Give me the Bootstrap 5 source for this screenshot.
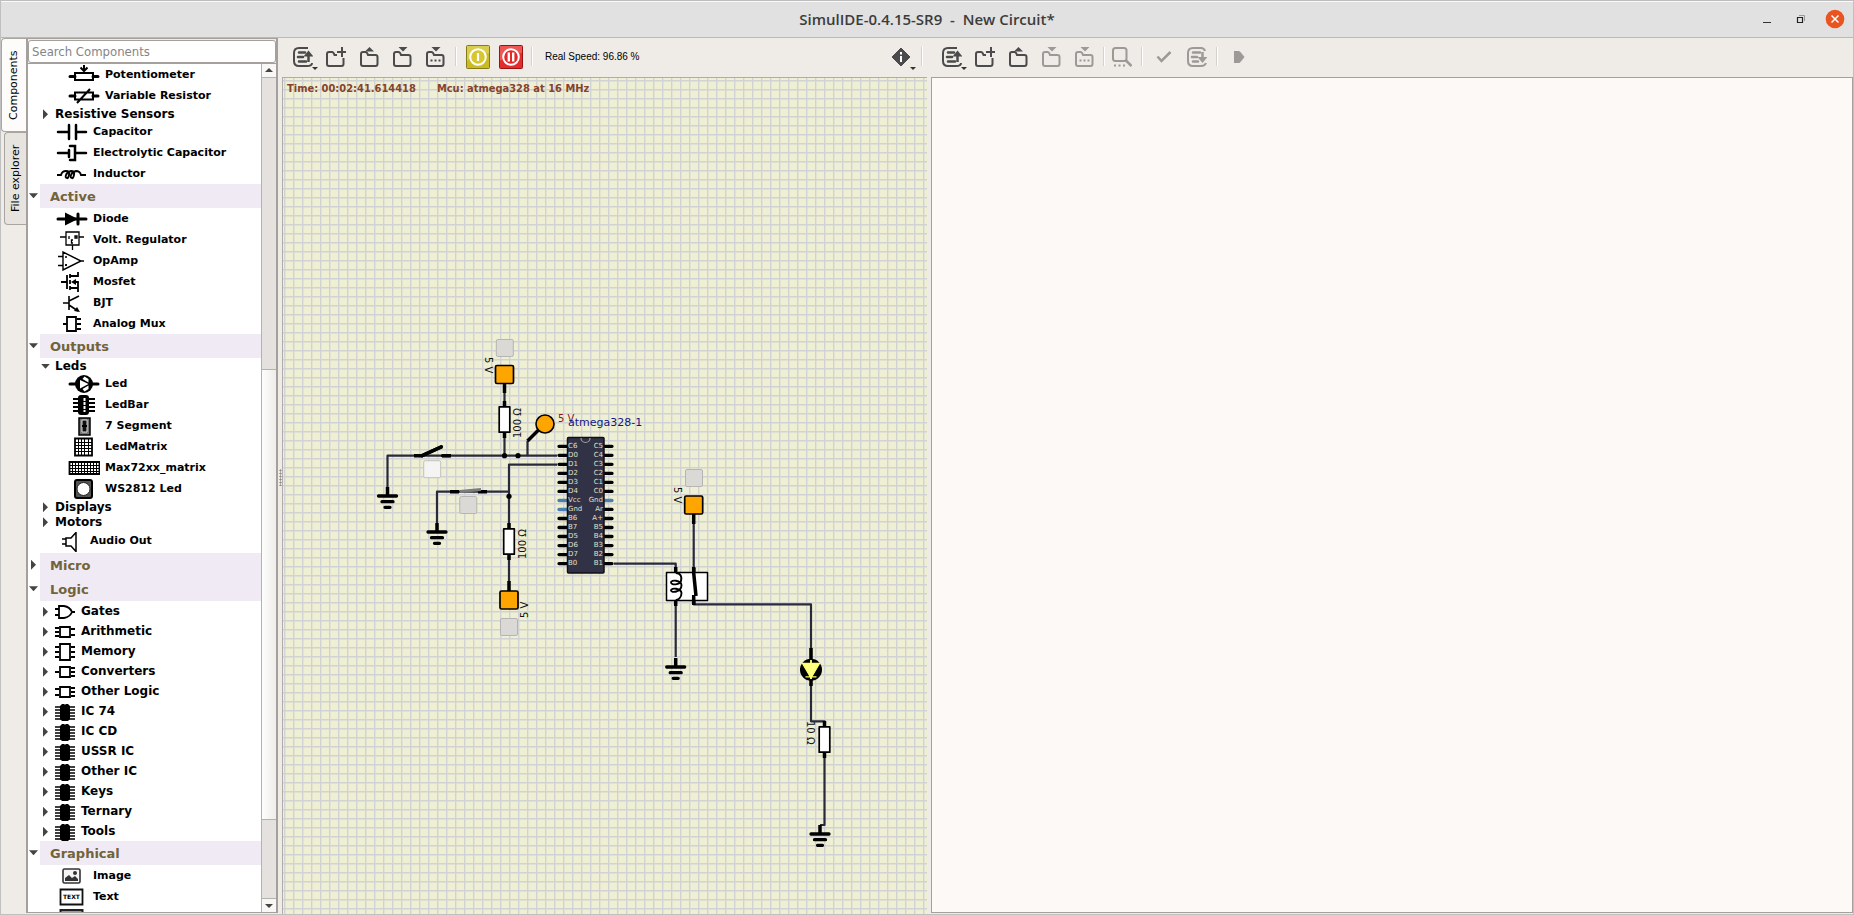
<!DOCTYPE html>
<html lang="en">
<head>
<meta charset="utf-8">
<meta name="viewport" content="width=device-width, initial-scale=1">
<title>SimulIDE-0.4.15-SR9 - New Circuit*</title>
<link href="https://cdn.jsdelivr.net/npm/bootstrap@5.3.0/dist/css/bootstrap.min.css" rel="stylesheet">
<style>
  body { font-family: "DejaVu Sans", sans-serif; font-size: 11px; color: #000; background: #efebe7; }
  button { padding: 0; border: 0; background: none; color: inherit; }
  svg { display: block; flex: none; }

  .app { border: 1px solid #c0c0c0; border-top: 0; }
  .titlebar { height: 38px; background: #e1e1e1; border-top: 1px solid #bdbdbd; border-bottom: 1px solid #b9b9b9; box-shadow: inset 0 1px #fafafa; }
  .titlebar h1 { font: 600 15px/20px "Open Sans", "Noto Sans", sans-serif; color: #3c3c3c; white-space: pre; }
  .window-buttons { position: absolute; right: 8px; top: 8px; gap: 14px; }
  .window-buttons button { width: 20px; height: 20px; }
  .window-buttons svg { margin: auto; }

  .sidebar { width: 277px; }
  .side-tabs { width: 25px; }
  .side-tabs button { writing-mode: vertical-rl; transform: rotate(180deg); font-size: 11px; line-height: 20px; border: 1px solid #a9a5a0; border-left: 0; border-radius: 0 4px 4px 0; }
  .side-tabs .current { width: 25px; height: 94px; background: #fdfcfb; }
  .side-tabs .other { width: 22px; height: 93px; background: #e7e4e0; align-self: flex-end; }
  .panel { border: solid #a5a09b; border-width: 1px 2px; margin-bottom: 1px; border-bottom-width: 1px; }
  .search { height: 23px; margin: 1px 0 0; padding: 0 3px; border: 1px solid #a5a09b; border-radius: 3px; font: 13px/20px "DejaVu Sans Condensed", "DejaVu Sans", sans-serif; }
  .search::placeholder { color: #858585; opacity: 1; }
  .tree-frame { border-top: 1px solid #a5a09b; background: #fff; overflow: hidden; }
  .tree { height: 100%; overflow: hidden; font-weight: 700; }
  .tree li { display: flex; align-items: center; white-space: nowrap; }
  .item { height: 21px; padding: 2px 0 0 28px; }
  .item svg { width: 32px; height: 20px; margin-right: 5px; }
  .item.deep { padding-left: 40px; }
  .item.sound { height: 24px; padding-left: 25px; }
  .subgroup { height: 15px; font-size: 12px; line-height: 15px; padding: 2px 0 0 15px; }
  .subgroup.pictured { height: 20px; }
  .subgroup .arrow { margin-right: 7px; }
  .subgroup .arrow.open { margin: 0 5px 0 -2px; }
  .subgroup.pictured svg { width: 20px; height: 18px; margin-right: 6px; }
  .group { height: 24px; font-size: 13px; color: #71633a; }
  .group span { flex: 1; height: 24px; line-height: 25px; padding-left: 10px; background: #f0eaf5; }
  .arrow { width: 5px; height: 10px; flex: none; background: #444; clip-path: polygon(0 0, 100% 50%, 0 100%); }
  .arrow.open { width: 9px; height: 5px; clip-path: polygon(0 0, 100% 0, 50% 100%); }
  .group .arrow { margin: 0 4px 0 3px; }
  .group .arrow.open { margin: 0 2px 0 1px; }
  .scrollbar { width: 15px; background: #e5e1de; border-left: 1px solid #b5b1ac; }
  .scrollbar button { height: 14px; background: #f8f7f6; border-bottom: 1px solid #b5b1ac; }
  .scrollbar button:last-child { border: 0; border-top: 1px solid #b5b1ac; }
  .scrollbar svg { margin: auto; }
  .before-thumb { flex: 292; }
  .thumb { flex: 450; background: linear-gradient(90deg, #fdfdfc, #efedea); border: solid #b5b1ac; border-width: 1px 0; }
  .after-thumb { flex: 78; }

  .grip { width: 4px; }
  .grip i { width: 3px; height: 17px; margin-top: 431px; background: radial-gradient(circle, #8d8984 40%, transparent 60%) 0 0 / 3px 3px; }
  .pane-circuit { flex: 645 1 0; }
  .pane-editor { flex: 926 1 0; }
  .tools { height: 39px; padding-bottom: 2px; color: #4b4b4b; }
  .tools button { width: 33px; height: 26px; position: relative; }
  .tools button > svg { margin: auto; }
  .tools button:disabled { color: #9c9a97; }
  .tools .drop::after { content: ""; position: absolute; right: 1px; bottom: 0; border: solid transparent; border-width: 3px 3px 0; border-top-color: #333; }
  .tools .rule { width: 2px; height: 19px; background: #d5d2ce; border-right: 1px solid #fff; }
  .pane-editor .rule { margin-left: 3px; }
  .speed { font: 10px/14px "Liberation Sans", sans-serif; color: #000; }
  .schematic { border: 1px solid #b0aca7; border-width: 1px 0 0 1px; overflow: hidden; background: #eff0d3; position: relative; }
  .schematic > svg { position: absolute; inset: 0; }
  .status { position: absolute; left: 4px; top: 4px; gap: 21px; font: 700 11px/14px "DejaVu Sans Condensed", "DejaVu Sans", sans-serif; color: #85432f; white-space: nowrap; }
  .code { resize: none; border: 1px solid #a5a09b; background: #fdf9f6; border-radius: 0; outline: 0; margin-bottom: 1px; }
</style>
</head>
<body>
<svg width="0" height="0" class="position-absolute" aria-hidden="true">
  <defs>
    <symbol id="i-file" viewBox="0 0 20 20"><path d="M15 1H6Q1 1 1 6v8q0 5 5 5h8q5 0 5-3" fill="none" stroke="currentColor" stroke-width="2"/><path d="M6 5.500h6M5 10h5M6 14.500h7" stroke="currentColor" stroke-width="2.500" stroke-linecap="round"/><path d="M15.500 15V8" stroke="currentColor" stroke-width="2.500"/><path d="M10.500 9.500l5-6 5 6z" fill="currentColor"/></symbol>
    <symbol id="i-filedown" viewBox="0 0 20 20"><path d="M18 4q-1-3-4-3H6Q1 1 1 6v8q0 5 5 5h8q4 0 5-3" fill="none" stroke="currentColor" stroke-width="2"/><path d="M6 5.500h7M5 10h5M6 14.500h5" stroke="currentColor" stroke-width="2.500" stroke-linecap="round"/><path d="M15.500 5v6" stroke="currentColor" stroke-width="2.500"/><path d="M10.500 10l5 6 5-6z" fill="currentColor"/></symbol>
    <symbol id="i-folder" viewBox="0 0 20 20"><path d="M2 17V7q0-2 2-2h2.500q1.500 0 2.500 3h7.500q2 0 2 2v7q0 2-2 2H4q-2 0-2-2z" fill="none" stroke="currentColor" stroke-width="2"/></symbol>
    <symbol id="i-new" viewBox="0 0 20 20"><path d="M11 8H8.500q-1-3-2.500-3H3q-2 0-2 2v10q0 2 2 2h12.500q2 0 2-2v-6" fill="none" stroke="currentColor" stroke-width="2"/><path d="M16 0v10M11 5h9" stroke="currentColor" stroke-width="2"/></symbol>
    <symbol id="i-open" viewBox="0 0 20 20"><use href="#i-folder"/><path d="M6 4.500L10.500 0 15 4.500z" fill="currentColor"/></symbol>
    <symbol id="i-save" viewBox="0 0 20 20"><use href="#i-folder"/><path d="M6.500 0h9L11 4.500z" fill="currentColor"/></symbol>
    <symbol id="i-saveas" viewBox="0 0 20 20"><use href="#i-save"/><path d="M5.500 12.500h2v2h-2zm4 0h2v2h-2zm4 0h2v2h-2z" fill="currentColor"/></symbol>

    <symbol id="c-pot" viewBox="0 0 32 20"><path d="M2 11.500h5M25 11.500h5" stroke="#000" stroke-width="3" stroke-linecap="round"/><path d="M7 8h18v7H7zM16 0v5M12.500 2.500l3.500 3.500 3.500-3.500" fill="none" stroke="#000" stroke-width="2"/></symbol>
    <symbol id="c-var" viewBox="0 0 32 20"><path d="M2 10h5M25 10h5" stroke="#000" stroke-width="3" stroke-linecap="round"/><path d="M7 6.500h18v7H7zM9 17L22 3" fill="none" stroke="#000" stroke-width="2"/></symbol>
    <symbol id="c-cap" viewBox="0 0 32 20"><path d="M2 10h11M20 10h10M13 3v14M20 3v14" stroke="#000" stroke-width="2.500" stroke-linecap="round"/></symbol>
    <symbol id="c-ecap" viewBox="0 0 32 20"><path d="M2 10h10M20 10h10M13 7v7M14 3h5v14h-5" fill="none" stroke="#000" stroke-width="2.500" stroke-linecap="round"/></symbol>
    <symbol id="c-ind" viewBox="0 0 32 20"><path d="M1 11h4q1-4 5-4 4 0 3 4t-2 3q-2 0-1-3t5-4q4 0 3 4t-2 3q-2 0-1-3t5-4q4 0 5 4h5" fill="none" stroke="#000" stroke-width="1.900"/></symbol>
    <symbol id="c-diode" viewBox="0 0 32 20"><path d="M2 10h28M22 5v10" stroke="#000" stroke-width="3" stroke-linecap="round"/><path d="M9 3.500L22 10 9 16.500z"/></symbol>
    <symbol id="c-reg" viewBox="0 0 32 20"><path d="M10 2h13v13H10zM4 7h6M23 7h5M16.500 15v5M13 6v3M19 6h2v2h-2zM17 10h-1.500v3H17" fill="none" stroke="#000" stroke-width="1.300"/></symbol>
    <symbol id="c-opamp" viewBox="0 0 32 20"><path d="M7 1v18l18-9zM2 5.500h5M2 14.500h5M23 10h5M9 6h2M9 14h2M10 13v2" fill="none" stroke="#000" stroke-width="1.400"/></symbol>
    <symbol id="c-mos" viewBox="0 0 32 20"><path d="M5 10h6M11 3v14M14 2v4M14 8v4M14 14v4M14 4h8V0M14 16h8v4M17 10h5v6" fill="none" stroke="#000" stroke-width="1.800"/><path d="M15 10l5-3v6z"/></symbol>
    <symbol id="c-bjt" viewBox="0 0 32 20"><path d="M7 10h6M13 3v14M13 8l10-5M13 12l9 6" fill="none" stroke="#000" stroke-width="1.600"/><path d="M24 19l-6-1 3-4z"/></symbol>
    <symbol id="c-mux" viewBox="0 0 32 20"><path d="M11 3h9v14h-9zM7 10h4M21 5h4M21 10h4M21 15h4" fill="none" stroke="#000" stroke-width="1.800"/></symbol>
    <symbol id="c-led" viewBox="0 0 32 20"><path d="M2 10h28" stroke="#000" stroke-width="3" stroke-linecap="round"/><circle cx="16" cy="10" r="9"/><path d="M14.500 5l6 3.500V5l-4-2.500zM12 6l8.500 4L12 14.500zM14.500 15l6-3.500V15l-4 2.500z" fill="#fff"/></symbol>
    <symbol id="c-bar" viewBox="0 0 32 20"><path d="M5 4h22M5 8h22M5 12h22M5 16h22" stroke="#000" stroke-width="2"/><rect x="10" width="11" height="20" rx="3"/><path d="M16.500 3v3M16.500 7v3M16.500 11v3M16.500 15v2" stroke="#fff" stroke-width="2"/></symbol>
    <symbol id="c-seg" viewBox="0 0 32 20"><path d="M11 2h11v17H11z" fill="#777" stroke="#000" stroke-width="1.500"/><path d="M14 4h5v6h-5zM14 10h5v6h-5z" fill="#111" stroke="#ddd"/><path d="M14 10h5" stroke="#000" stroke-width="2"/></symbol>
    <symbol id="c-matrix" viewBox="0 0 32 20"><path d="M7 1.500h17v17H7z" fill="#fff" stroke="#000" stroke-width="1.800"/><path d="M10.500 2v16M13.500 2v16M16.500 2v16M20.500 2v16M7 5.500h17M7 8.500h17M7 11.500h17M7 14.500h17" stroke="#000"/></symbol>
    <symbol id="c-max" viewBox="0 0 32 20"><path d="M1.500 4h30v12h-30z" fill="#fff" stroke="#000" stroke-width="1.800"/><path d="M4.500 4v12M7.500 4v12M10.500 4v12M13.500 4v12M16.500 4v12M19.500 4v12M22.500 4v12M25.500 4v12M28.500 4v12M1 7.500h30M1 10.500h30M1 13.500h30" stroke="#000"/></symbol>
    <symbol id="c-ws" viewBox="0 0 32 20"><rect x="7" y="1" width="17" height="18" rx="2" fill="#555" stroke="#000" stroke-width="2"/><circle cx="15.500" cy="10" r="6.500" fill="#fff" stroke="#222"/></symbol>
    <symbol id="c-audio" viewBox="0 0 32 20"><path d="M13 6h5l5-5.500v19L18 14h-5zM9 7h4M9 12h4" fill="none" stroke="#000" stroke-width="1.500"/></symbol>
    <symbol id="c-gate" viewBox="0 0 20 18"><path d="M4 3h5q6 1 8 6-2 5-8 6H4zM0 6h4M0 12h4M16 9h4" fill="none" stroke="#000" stroke-width="1.800"/></symbol>
    <symbol id="c-arith" viewBox="0 0 20 18"><path d="M5 4h10v10H5zM0 5h4M0 9h4M0 13h4M16 6h4M16 12h4" fill="none" stroke="#000" stroke-width="1.800"/></symbol>
    <symbol id="c-mem" viewBox="0 0 20 18"><path d="M5 1h10v16H5zM0 4h4M0 9h4M0 14h4M16 4h4M16 9h4M16 14h4" fill="none" stroke="#000" stroke-width="1.800"/></symbol>
    <symbol id="c-conv" viewBox="0 0 20 18"><path d="M5 4h10v10H5zM0 9h4M16 5h4M16 9h4M16 13h4" fill="none" stroke="#000" stroke-width="1.800"/></symbol>
    <symbol id="c-other" viewBox="0 0 20 18"><path d="M5 4h10v10H5zM0 6h4M0 12h4M16 5h4M16 9h4M16 13h4" fill="none" stroke="#000" stroke-width="1.800"/></symbol>
    <symbol id="c-ic" viewBox="0 0 20 18"><path d="M0 4h20M0 7h20M0 10h20M0 13h20M0 16h20" stroke="#000" stroke-width="1.700"/><path d="M7 1h2q1 1 2 0h2l2 2v13l-2 2H7l-2-2V3z"/></symbol>
    <symbol id="c-image" viewBox="0 0 32 20"><rect x="7" y="3" width="17" height="14" rx="1.500" fill="#f5f5f5" stroke="#333" stroke-width="1.600"/><path d="M9 15v-3l4-3 3 3 3-2 3 3v2z" fill="#333"/><circle cx="19" cy="7" r="2" fill="#333"/></symbol>
    <symbol id="c-text" viewBox="0 0 32 20"><path d="M4.500 2.500h22v15h-22z" fill="#fff" stroke="#111" stroke-width="1.800"/><text x="15.500" y="12" font-size="6" text-anchor="middle" font-weight="700">TEXT</text></symbol>

    <g id="p-ground"><path d="M0-9V0" stroke="#000" stroke-width="3.500"/><path d="M-9 0H9M-5.500 5.700H5.500M-2.500 11.300H2.500" stroke="#000" stroke-width="3.300" stroke-linecap="round"/></g>
    <rect id="p-source" x="-9" y="-9" width="18" height="18" rx="1.500" fill="#ffa500" stroke="#000" stroke-width="1.700"/>
    <rect id="p-button" x="-8.500" y="-8.500" width="17" height="17" rx="1.500" fill="#dad9d5" stroke="#b6b5b3"/>
    <rect id="p-resistor" x="-5.300" y="-12.700" width="10.600" height="25.400" fill="#fff" stroke="#000" stroke-width="1.700"/>
    <pattern id="mesh" width="9" height="9" patternUnits="userSpaceOnUse" x="1" y="2"><path d="M.700 0v9M0 .700h9" stroke="#d1d2d3" stroke-width="1.400"/></pattern>
  </defs>
</svg>

<div class="app d-flex flex-column vh-100">
  <header class="titlebar position-relative d-flex align-items-center justify-content-center flex-shrink-0">
    <h1 class="m-0">SimulIDE-0.4.15-SR9  -  New Circuit*</h1>
    <div class="window-buttons d-flex">
      <button type="button" aria-label="Minimize"><svg width="10" height="12"><path d="M1 9.500h8" stroke="#333"/></svg></button>
      <button type="button" aria-label="Restore"><svg width="10" height="12"><path d="M3 2.500h5.500V8" fill="none" stroke="#999"/><path d="M1.500 4.500h5v5h-5z" fill="none" stroke="#222" stroke-width="1.200"/></svg></button>
      <button type="button" aria-label="Close"><svg width="20" height="20"><circle cx="10" cy="10" r="9.300" fill="#e95420"/><path d="M6.500 6.500l7 7M13.500 6.500l-7 7" stroke="#fff" stroke-width="1.500"/></svg></button>
    </div>
  </header>

  <div class="d-flex flex-grow-1" style="min-height:0">
    <aside class="sidebar d-flex flex-shrink-0">
      <div class="side-tabs d-flex flex-column flex-shrink-0">
        <button type="button" class="current">Components</button>
        <button type="button" class="other">File explorer</button>
      </div>
      <div class="panel d-flex flex-column flex-grow-1">
        <input class="search" type="text" placeholder="Search Components" aria-label="Search Components">
        <div class="tree-frame d-flex flex-grow-1">
          <ul class="tree list-unstyled m-0 flex-grow-1">
            <li class="item deep"><svg><use href="#c-pot"/></svg>Potentiometer</li>
            <li class="item deep"><svg><use href="#c-var"/></svg>Variable Resistor</li>
            <li class="subgroup"><i class="arrow"></i>Resistive Sensors</li>
            <li class="item"><svg><use href="#c-cap"/></svg>Capacitor</li>
            <li class="item"><svg><use href="#c-ecap"/></svg>Electrolytic Capacitor</li>
            <li class="item"><svg><use href="#c-ind"/></svg>Inductor</li>
            <li class="group"><i class="arrow open"></i><span>Active</span></li>
            <li class="item"><svg><use href="#c-diode"/></svg>Diode</li>
            <li class="item"><svg><use href="#c-reg"/></svg>Volt. Regulator</li>
            <li class="item"><svg><use href="#c-opamp"/></svg>OpAmp</li>
            <li class="item"><svg><use href="#c-mos"/></svg>Mosfet</li>
            <li class="item"><svg><use href="#c-bjt"/></svg>BJT</li>
            <li class="item"><svg><use href="#c-mux"/></svg>Analog Mux</li>
            <li class="group"><i class="arrow open"></i><span>Outputs</span></li>
            <li class="subgroup"><i class="arrow open"></i>Leds</li>
            <li class="item deep"><svg><use href="#c-led"/></svg>Led</li>
            <li class="item deep"><svg><use href="#c-bar"/></svg>LedBar</li>
            <li class="item deep"><svg><use href="#c-seg"/></svg>7 Segment</li>
            <li class="item deep"><svg><use href="#c-matrix"/></svg>LedMatrix</li>
            <li class="item deep"><svg><use href="#c-max"/></svg>Max72xx_matrix</li>
            <li class="item deep"><svg><use href="#c-ws"/></svg>WS2812 Led</li>
            <li class="subgroup"><i class="arrow"></i>Displays</li>
            <li class="subgroup"><i class="arrow"></i>Motors</li>
            <li class="item sound"><svg><use href="#c-audio"/></svg>Audio Out</li>
            <li class="group"><i class="arrow"></i><span>Micro</span></li>
            <li class="group"><i class="arrow open"></i><span>Logic</span></li>
            <li class="subgroup pictured"><i class="arrow"></i><svg><use href="#c-gate"/></svg>Gates</li>
            <li class="subgroup pictured"><i class="arrow"></i><svg><use href="#c-arith"/></svg>Arithmetic</li>
            <li class="subgroup pictured"><i class="arrow"></i><svg><use href="#c-mem"/></svg>Memory</li>
            <li class="subgroup pictured"><i class="arrow"></i><svg><use href="#c-conv"/></svg>Converters</li>
            <li class="subgroup pictured"><i class="arrow"></i><svg><use href="#c-other"/></svg>Other Logic</li>
            <li class="subgroup pictured"><i class="arrow"></i><svg><use href="#c-ic"/></svg>IC 74</li>
            <li class="subgroup pictured"><i class="arrow"></i><svg><use href="#c-ic"/></svg>IC CD</li>
            <li class="subgroup pictured"><i class="arrow"></i><svg><use href="#c-ic"/></svg>USSR IC</li>
            <li class="subgroup pictured"><i class="arrow"></i><svg><use href="#c-ic"/></svg>Other IC</li>
            <li class="subgroup pictured"><i class="arrow"></i><svg><use href="#c-ic"/></svg>Keys</li>
            <li class="subgroup pictured"><i class="arrow"></i><svg><use href="#c-ic"/></svg>Ternary</li>
            <li class="subgroup pictured"><i class="arrow"></i><svg><use href="#c-ic"/></svg>Tools</li>
            <li class="group"><i class="arrow open"></i><span>Graphical</span></li>
            <li class="item"><svg><use href="#c-image"/></svg>Image</li>
            <li class="item"><svg><use href="#c-text"/></svg>Text</li>
            <li class="item"><svg viewBox="0 0 32 20"><path d="M4.500 2h22v15h-22z" fill="#999" stroke="#222" stroke-width="2"/></svg></li>
          </ul>
          <div class="scrollbar d-flex flex-column flex-shrink-0">
            <button type="button" aria-label="Scroll up"><svg width="8" height="4"><path d="M0 4l4-4 4 4z" fill="#444"/></svg></button>
            <div class="before-thumb"></div><div class="thumb"></div><div class="after-thumb"></div>
            <button type="button" aria-label="Scroll down"><svg width="8" height="4"><path d="M0 0h8l-4 4z" fill="#444"/></svg></button>
          </div>
        </div>
      </div>
    </aside>
    <div class="grip flex-shrink-0 d-flex justify-content-center"><i></i></div>

    <main class="d-flex flex-grow-1">
      <section class="pane-circuit d-flex flex-column" style="min-width:0">
        <div class="tools d-flex align-items-center flex-shrink-0">
          <button type="button" class="drop ms-1" aria-label="Recent circuits"><svg width="20" height="20"><use href="#i-file"/></svg></button>
          <button type="button" aria-label="New circuit"><svg width="20" height="20"><use href="#i-new"/></svg></button>
          <button type="button" aria-label="Open circuit"><svg width="20" height="20"><use href="#i-open"/></svg></button>
          <button type="button" aria-label="Save circuit"><svg width="20" height="20"><use href="#i-save"/></svg></button>
          <button type="button" aria-label="Save circuit as"><svg width="20" height="20"><use href="#i-saveas"/></svg></button>
          <span class="rule ms-1"></span>
          <button type="button" class="ms-1" aria-label="Power circuit"><svg width="24" height="24"><rect x=".500" y=".500" width="23" height="23" rx="1" fill="#cabb22" stroke="#857b18"/><path d="M1 1h22v7Q10 8 1 16z" fill="#d9cd50"/><circle cx="12" cy="12" r="7.800" fill="#d6c72f" stroke="#fff" stroke-width="2"/><path d="M12 8v8" stroke="#fff" stroke-width="2.200"/></svg></button>
          <button type="button" aria-label="Pause simulation"><svg width="24" height="24"><rect x=".500" y=".500" width="23" height="23" rx="1" fill="#e52b2b" stroke="#981414"/><path d="M1 1h22v7Q10 8 1 16z" fill="#ee5555"/><circle cx="12" cy="12" r="7.800" fill="#e62727" stroke="#fff" stroke-width="2"/><path d="M9.800 7.500v9M14.200 7.500v9" stroke="#fff" stroke-width="2.400"/></svg></button>
          <span class="rule ms-1 me-2"></span>
          <span class="speed ms-1">Real Speed: 96.86 %</span>
          <button type="button" class="drop ms-auto" aria-label="Information"><svg width="20" height="20"><path d="M10 1l9 9-9 9-9-9z" fill="currentColor" stroke="currentColor" stroke-linejoin="round"/><path d="M10 5v2.500M10 9v6" stroke="#fff" stroke-width="2"/></svg></button>
          <span class="rule ms-1 me-1"></span>
        </div>
        <div class="schematic flex-grow-1">
          <svg width="100%" height="100%" role="img" aria-label="Circuit">
            <rect width="100%" height="100%" fill="url(#mesh)"/>
            <g transform="translate(-283 -78)" fill="none" stroke-linejoin="round">
              <g stroke="#29293c" stroke-width="2.200">
                <path d="M504.500 384v72M387.500 487v-31.300H557M527.500 455.700V441M437 523v-31.300h72M557 464.700h-48v117M614 563.700h61.700V657M693.700 515v89.300H811V721.300h13.500V825H820"/>
              </g>
              <g stroke="#000" stroke-width="3.500">
                <path d="M504.500 384v9M504.500 401v6M504.500 432v6M414 455.700h9M451 455.700h-9M422 455.700l20-9M450 491.700h9M487 491.700h-9M509 523v6M509 554v6M509 581v10M527.500 441l12-12M675.700 567v6M675.700 600v6M693.700 514v10M693.700 567v6M693.700 595v9.500M811 648v12M811 679v7M824.500 721v6M824.500 752v6" stroke-linecap="butt"/>
                <path d="M422 455.700l19.500-9M442.500 455.700h7" stroke-width="3.300" stroke-linecap="round"/>
              </g>
              <path d="M460 491.500l21-2" stroke="#7c7c7c" stroke-width="2.800"/>
              <g fill="#000"><circle cx="504.500" cy="455.700" r="2.600"/><circle cx="518" cy="455.700" r="2.600"/><circle cx="509" cy="496.300" r="2.600"/></g>
              <use href="#p-ground" x="387.500" y="496"/><use href="#p-ground" x="437" y="532"/><use href="#p-ground" x="675.700" y="667"/><use href="#p-ground" x="820" y="834"/>
              <use href="#p-source" x="504.500" y="374.500"/><use href="#p-source" x="509" y="600"/><use href="#p-source" x="693.700" y="505"/>
              <use href="#p-button" x="504.800" y="348"/><use href="#p-button" x="509" y="627"/><use href="#p-button" x="694" y="478"/><use href="#p-button" x="468.300" y="505"/>
              <rect x="423.700" y="460.700" width="17" height="17" rx="1.500" fill="#f4f4f3" stroke="#c2c1bf"/>
              <use href="#p-resistor" x="504.500" y="419.500"/><use href="#p-resistor" x="509" y="541.500"/><use href="#p-resistor" x="824.500" y="739.500"/>
              <circle cx="545" cy="424" r="9" fill="#ffa500" stroke="#000" stroke-width="1.600"/>
              <!-- relay -->
              <path d="M666.500 572.500h41v28h-41z" fill="#fff" stroke="#000" stroke-width="1.500"/>
              <path d="M675.700 573C681 573 682 577 681 581C680 585 671 585.500 671 582.300C671 579.500 681 580 681.500 585C681.500 592 671 593.500 671 590.300C671 587.500 681 588 681.500 593C681.500 598 678 600 675.700 600" stroke="#000" stroke-width="1.900"/>
              <path d="M693.700 568v5l2.300 23M693.700 595v10" stroke="#000" stroke-width="3.500"/>
              <!-- led -->
              <circle cx="811" cy="669.700" r="11" fill="#000"/>
              <path d="M802.500 663.500h17L811 678zM805.500 676.800h11" fill="#ffff80" stroke="#ffff64" stroke-width="1.300"/><path d="M811 660v19" stroke="#ffff80" stroke-width="1.800"/>
              <!-- microcontroller -->
              <g stroke-width="3.300" stroke-linecap="round">
                <path stroke="#000" d="M559 446.300h8m-8 9h8m-8 9h8m-8 9.100h8m-8 9h8m-8 9h8m-8 27.100h8m-8 9h8m-8 9h8m-8 9.100h8m-8 9h8m-8 9h8"/>
                <path stroke="#000" d="M604 446.300h8m-8 9h8m-8 9h8m-8 9.100h8m-8 9h8m-8 9h8m-8 18h8m-8 9.100h8m-8 9h8m-8 9h8m-8 9.100h8m-8 9h8m-8 9h8"/>
                <path stroke="#4c7eb0" d="M559 500.500h8m-8 9h8m37-9h8"/>
              </g>
              <rect x="567.500" y="437.500" width="36.500" height="135.500" rx="1" fill="#323246" stroke="#101018" stroke-width="1.500"/>
              <path d="M581 438a4.500 4.500 0 0 0 9 0" stroke="#a0a09a" stroke-width="1.200"/>
              <g fill="#e0e0c4" font-size="7" font-family="DejaVu Sans, sans-serif">
                <text x="568" y="448">C6</text><text x="568" y="457">D0</text><text x="568" y="466">D1</text><text x="568" y="475">D2</text><text x="568" y="484">D3</text><text x="568" y="493">D4</text><text x="568" y="502">Vcc</text><text x="568" y="511">Gnd</text><text x="568" y="520">B6</text><text x="568" y="529">B7</text><text x="568" y="538">D5</text><text x="568" y="547">D6</text><text x="568" y="556">D7</text><text x="568" y="565">B0</text>
                <g text-anchor="end"><text x="603" y="448">C5</text><text x="603" y="457">C4</text><text x="603" y="466">C3</text><text x="603" y="475">C2</text><text x="603" y="484">C1</text><text x="603" y="493">C0</text><text x="603" y="502">Gnd</text><text x="603" y="511">Ar</text><text x="603" y="520">A+</text><text x="603" y="529">B5</text><text x="603" y="538">B4</text><text x="603" y="547">B3</text><text x="603" y="556">B2</text><text x="603" y="565">B1</text></g>
              </g>
              <g font-family="DejaVu Sans, sans-serif" font-size="10" fill="#111">
                <text x="558" y="422" fill="#8b1a1a">5 V</text>
                <text x="568" y="426" font-size="11" fill="#151585">atmega328-1</text>
                <text transform="translate(485 357) rotate(90)">5 V</text>
                <text transform="translate(674 487) rotate(90)">5 V</text>
                <text transform="translate(807 721) rotate(90)">10 Ω</text>
                <text transform="translate(521 438) rotate(-90)">100 Ω</text>
                <text transform="translate(526 559) rotate(-90)">100 Ω</text>
                <text transform="translate(528 618) rotate(-90)">5 V</text>
              </g>
            </g>
          </svg>
          <div class="status d-flex"><span>Time: 00:02:41.614418</span><span>Mcu: atmega328 at 16 MHz</span></div>
        </div>
      </section>
      <section class="pane-editor d-flex flex-column" style="min-width:0">
        <div class="tools d-flex align-items-center flex-shrink-0">
          <button type="button" class="drop ms-2" aria-label="Recent files"><svg width="20" height="20"><use href="#i-file"/></svg></button>
          <button type="button" aria-label="New file"><svg width="20" height="20"><use href="#i-new"/></svg></button>
          <button type="button" aria-label="Open file"><svg width="20" height="20"><use href="#i-open"/></svg></button>
          <button type="button" disabled aria-label="Save file"><svg width="20" height="20"><use href="#i-save"/></svg></button>
          <button type="button" disabled aria-label="Save file as"><svg width="20" height="20"><use href="#i-saveas"/></svg></button>
          <span class="rule"></span>
          <button type="button" disabled aria-label="Find"><svg width="20" height="20"><rect x="1" y="1" width="13.500" height="13" rx="2.500" fill="none" stroke="currentColor" stroke-width="2"/><path d="M13.500 13l6 6" stroke="currentColor" stroke-width="2.500"/><path d="M2 17.500h2v2H2zm4.500 0h2v2h-2zm4.500 0h2v2h-2z" fill="currentColor"/></svg></button>
          <span class="rule"></span>
          <button type="button" disabled class="ms-1" aria-label="Compile"><svg width="16" height="14"><path d="M1.500 6.500l4 4.500 9-9" fill="none" stroke="currentColor" stroke-width="2.500"/></svg></button>
          <button type="button" disabled aria-label="Upload"><svg width="20" height="20"><use href="#i-filedown"/></svg></button>
          <span class="rule"></span>
          <button type="button" disabled class="ms-1" aria-label="Debug"><svg width="12" height="12"><path d="M1 0h5q1 0 5.500 6Q7 12 6 12H1z" fill="currentColor"/></svg></button>
        </div>
        <textarea class="code flex-grow-1 ms-1" aria-label="Source code"></textarea>
      </section>
    </main>
  </div>
</div>
<script src="https://cdn.jsdelivr.net/npm/bootstrap@5.3.0/dist/js/bootstrap.bundle.min.js"></script>
</body>
</html>
